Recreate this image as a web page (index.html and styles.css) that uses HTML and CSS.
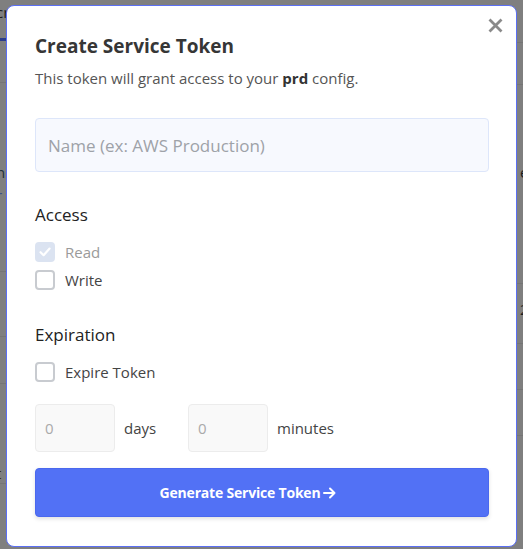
FILE: index.html
```html
<!DOCTYPE html>
<html lang="en">
<head>
<meta charset="utf-8">
<title>Create Service Token</title>
<link rel="stylesheet" href="styles.css">
</head>
<body>
<div class="backdrop">
  <div class="side side-left">
    <div class="bg-row r1"><span class="frag">cr</span></div>
    <div class="bg-tab"></div>
    <div class="bg-row r2"></div>
    <div class="bg-row r3"><span class="frag f-n">n.</span><span class="frag f-blue">r</span></div>
    <div class="bg-row r4"></div>
    <div class="bg-row r5"></div>
    <div class="bg-row r6"><span class="frag f-t">t</span></div>
  </div>
  <div class="side side-right">
    <div class="bg-row q1"></div>
    <div class="bg-row q2"></div>
    <div class="bg-row q3"><span class="frag f-e">e</span></div>
    <div class="bg-row q4"><span class="frag f-2">2</span></div>
    <div class="bg-row q5"></div>
    <div class="bg-row q6"></div>
  </div>
</div>

<div class="modal">
  <button class="close" aria-label="Close">
    <svg width="15" height="15" viewBox="0 0 15 15"><path d="M1.5 1.5 L13.5 13.5 M13.5 1.5 L1.5 13.5" stroke="#8a8a8a" stroke-width="2.8" stroke-linecap="butt" fill="none"/></svg>
  </button>
  <h2 class="title">Create Service Token</h2>
  <p class="subtitle">This token will grant access to your <b>prd</b> config.</p>
  <input class="name-input" type="text" placeholder="Name (ex: AWS Production)">

  <div class="section-label">Access</div>
  <div class="checks">
    <label class="check-row disabled">
      <span class="box checked">
        <svg width="14" height="14" viewBox="0 0 14 14"><path d="M2.5 7.2 L5.6 10.2 L11.6 3.6" stroke="#fff" stroke-width="2.2" fill="none" stroke-linecap="round" stroke-linejoin="round"/></svg>
      </span>
      <span class="check-text">Read</span>
    </label>
    <label class="check-row">
      <span class="box"></span>
      <span class="check-text">Write</span>
    </label>
  </div>

  <div class="section-label second">Expiration</div>
  <div class="checks">
    <label class="check-row">
      <span class="box"></span>
      <span class="check-text">Expire Token</span>
    </label>
  </div>

  <div class="duration">
    <input class="num" type="text" placeholder="0">
    <span class="unit unit-days">days</span>
    <input class="num" type="text" placeholder="0">
    <span class="unit">minutes</span>
  </div>

  <button class="submit">Generate Service Token<svg class="arrow" width="13" height="12" viewBox="0 0 13 12"><path d="M1 6 H11.5 M7 1.5 L11.5 6 L7 10.5" stroke="#fff" stroke-width="2" fill="none" stroke-linecap="round" stroke-linejoin="round"/></svg></button>
</div>
</body>
</html>
```

FILE: styles.css
```css
* { box-sizing: border-box; }

html, body {
  margin: 0;
  padding: 0;
  height: 100%;
}

body {
  background: #7f7f7f;
  font-family: "Open Sans", "Noto Sans", sans-serif;
  overflow: hidden;
}

/* dimmed page behind the modal */
.backdrop {
  display: flex;
  justify-content: space-between;
  height: 100%;
}

.side {
  width: 10px;
  display: flex;
  flex-direction: column;
}

.bg-row {
  border-bottom: 1px solid #757575;
  position: relative;
}

.frag {
  display: block;
  font-size: 15px;
  line-height: 15px;
  color: #1c1c1c;
}

.side-left .frag { margin-left: -4px; }

.r1 { height: 38px; border-bottom: none; padding-top: 5px; }
.bg-tab { height: 3px; width: 7px; background: #2b3d8c; }
.r2 { height: 42px; }
.r3 { height: 189px; padding-top: 82px; }
.f-n { color: #20303a; }
.f-blue { color: #3a4f86; margin-top: 8px; }
.r4 { height: 65px; }
.r5 { height: 47px; }
.r6 { height: 100px; padding-top: 82px; }
.f-t { color: #3a2c10; }

.side-right .frag { margin-left: 7px; }
.q1 { height: 43px; }
.q2 { height: 42px; }
.q3 { height: 199px; padding-top: 80px; }
.q4 { height: 60px; padding-top: 18px; }
.q5 { height: 46px; }
.q6 { height: 46px; }

/* modal */
.modal {
  position: fixed;
  top: 5px;
  left: 6px;
  width: 511px;
  height: 542px;
  background: #fff;
  border: 1px solid #5b6ff4;
  border-radius: 8px;
  padding: 26px 27px 28px 28px;
  display: flex;
  flex-direction: column;
}

.close {
  position: absolute;
  top: 12px;
  right: 13px;
  width: 15px;
  height: 15px;
  padding: 0;
  border: 0;
  background: none;
  display: flex;
}

.title {
  margin: 0;
  font-size: 19px;
  line-height: 28px;
  font-weight: 700;
  color: #363636;
}

.subtitle {
  margin: 8px 0 0;
  font-size: 15px;
  line-height: 20px;
  color: #555;
}

.subtitle b {
  color: #333;
  font-weight: 700;
}

.name-input {
  margin-top: 30px;
  height: 54px;
  width: 100%;
  border: 1px solid #dde6fa;
  background: #f7f9fe;
  border-radius: 4px;
  padding: 0 12px;
  font-family: inherit;
  font-size: 17px;
  color: #333;
  outline: none;
}

.name-input::placeholder { color: #9ea2a8; }

.section-label {
  margin-top: 31px;
  font-size: 17px;
  line-height: 24px;
  color: #222;
}

.section-label.second { margin-top: 29px; }

.checks {
  margin-top: 11px;
  display: flex;
  flex-direction: column;
}

.check-row {
  height: 28px;
  display: flex;
  align-items: center;
  gap: 10px;
}

.box {
  width: 20px;
  height: 20px;
  border: 2px solid #c8cbd0;
  border-radius: 4px;
  background: #fff;
  display: flex;
  align-items: center;
  justify-content: center;
}

.box.checked {
  background: #dbe3f1;
  border-color: #dbe3f1;
}

.check-text {
  font-size: 15px;
  color: #444;
}

.disabled .check-text { color: #9a9a9a; }

.duration {
  margin-top: 18px;
  display: flex;
  align-items: center;
}

.num {
  width: 80px;
  height: 48px;
  border: 1px solid #ececec;
  background: #f9f9f9;
  border-radius: 4px;
  padding: 0 9px;
  font-family: inherit;
  font-size: 15px;
  outline: none;
}

.num::placeholder { color: #aaa; }

.unit {
  margin-left: 9px;
  font-size: 15px;
  color: #444;
}

.unit-days { width: 64px; }

.submit {
  margin-top: 16px;
  height: 49px;
  width: 100%;
  background: #5271f5;
  border: 1px solid #4a68ee;
  border-radius: 4px;
  color: #fff;
  font-family: inherit;
  font-size: 14px;
  font-weight: 700;
  letter-spacing: -0.2px;
  box-shadow: 0 2px 4px rgba(0,0,0,0.12);
  display: flex;
  align-items: center;
  justify-content: center;
  gap: 3px;
  padding: 0 28px 0 0;
}

.arrow { display: block; }
```
